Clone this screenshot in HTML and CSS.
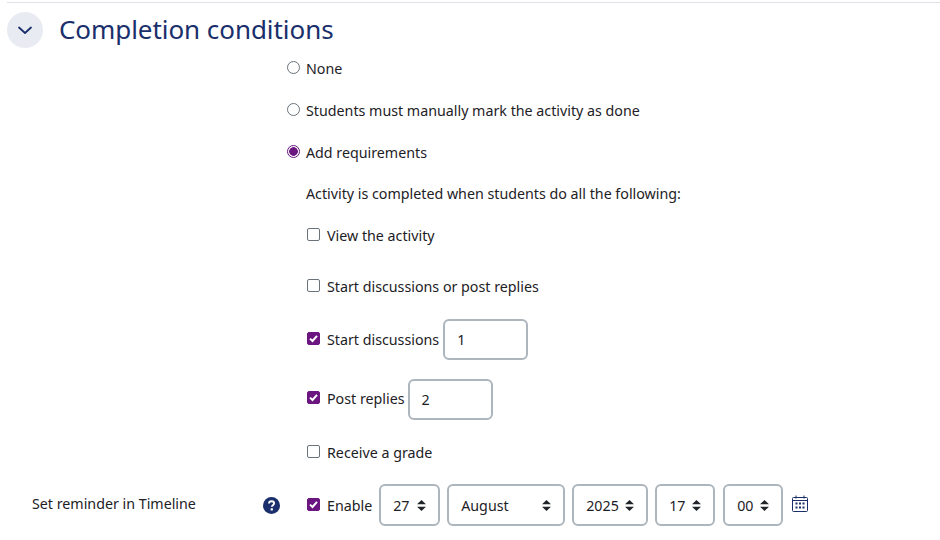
FILE: index.html
```html
<!DOCTYPE html>
<html lang="en">
<head>
    <meta charset="UTF-8">
    <title>Completion conditions</title>
    <link rel="stylesheet" href="styles.css">
</head>
<body>
    <main class="section">
        <div class="section-head">
            <a class="toggle" href="#">
                <svg width="16" height="16" viewBox="0 0 16 16" fill="none" stroke="#1a2f6b" stroke-width="1.8" stroke-linecap="round" stroke-linejoin="round">
                    <path d="M2 5.5 8 11 14 5.5"/>
                </svg>
            </a>
            <h3>Completion conditions</h3>
        </div>
        <div class="options">
            <label class="row r-none"><input type="radio" name="c"> None</label>
            <label class="row r-manual"><input type="radio" name="c"> Students must manually mark the activity as done</label>
            <label class="row r-add"><input type="radio" name="c" checked> Add requirements</label>
            <div class="row r-note">Activity is completed when students do all the following:</div>
            <div class="sub">
                <label class="row r-view"><input type="checkbox"> View the activity</label>
                <label class="row r-start"><input type="checkbox"> Start discussions or post replies</label>
                <div class="row r-disc">
                    <label><input type="checkbox" checked> Start discussions</label>
                    <input class="num" type="text" value="1">
                </div>
                <div class="row r-post">
                    <label><input type="checkbox" checked> Post replies</label>
                    <input class="num" type="text" value="2">
                </div>
                <label class="row r-grade"><input type="checkbox"> Receive a grade</label>
            </div>
        </div>
        <div class="reminder">
            <div class="reminder-label">Set reminder in Timeline</div>
            <div class="help">
                <svg width="17" height="17" viewBox="0 0 17 17">
                    <circle cx="8.5" cy="8.5" r="8.5" fill="#1a2f6b"/>
                    <path d="M6 6.6c0-1.5 1.1-2.4 2.6-2.4s2.5.9 2.5 2.1c0 1.9-2.3 1.9-2.3 3.5" fill="none" stroke="#fff" stroke-width="1.9"/>
                    <rect x="7.6" y="11.2" width="2.3" height="2.2" rx=".4" fill="#fff"/>
                </svg>
            </div>
            <div class="date-fields">
                <label><input type="checkbox" checked> Enable</label>
                <select class="s-day"><option>27</option></select>
                <select class="s-month"><option>August</option></select>
                <select class="s-year"><option>2025</option></select>
                <select class="s-hour"><option>17</option></select>
                <select class="s-min"><option>00</option></select>
                <a class="calendar" href="#">
                    <svg width="16" height="17" viewBox="0 0 16 17" fill="none" stroke="#1a2f6b">
                        <rect x=".5" y="2.5" width="15" height="14" rx="1"/>
                        <path d="M.5 5.5h15M4 .5v3M12 .5v3"/>
                        <path stroke-width="1.8" d="M3.5 8.5h2M7 8.5h2M10.5 8.5h2M3.5 12.5h2M7 12.5h2M10.5 12.5h2"/>
                    </svg>
                </a>
            </div>
        </div>
    </main>
</body>
</html>
```

FILE: styles.css
```css
html, body {
    margin: 0;
    padding: 0;
}

body {
    background: #fff;
    color: #1d2125;
    font-family: "Noto Sans", sans-serif;
    font-size: 14.25px;
}

.section {
    margin-top: 2px;
    margin-left: 7px;
    border-top: 1px solid #dee2e6;
}

.section-head {
    display: flex;
    align-items: center;
    height: 36px;
    margin-top: 9px;
}
.toggle {
    width: 36px;
    height: 36px;
    border-radius: 50%;
    background: #e9ebf2;
    display: flex;
    align-items: center;
    justify-content: center;
}
.section-head h3 {
    margin: 0 0 2px 16px;
    color: #1a2f6b;
    font-size: 26px;
    font-weight: 400;
    letter-spacing: -0.06px;
}

.options {
    margin-left: 280px;
    margin-top: -1px;
}
.row {
    display: flex;
    align-items: center;
    height: 42px;
}
.r-note {
    height: 40px;
    margin-bottom: 1px;
    padding-left: 19px;
}
.sub {
    padding-left: 20px;
}
.r-view {
    height: 42px;
}
.r-start {
    height: 60px;
}
.r-disc {
    height: 46px;
}
.r-post {
    height: 73px;
}
.r-post .num {
    margin-top: 2px;
    margin-left: 3px;
}
.r-grade {
    height: 34px;
}

label {
    display: flex;
    align-items: center;
}

input[type=radio], input[type=checkbox] {
    appearance: none;
    width: 13px;
    height: 13px;
    margin: 0 6px 2px 0;
    border: 1px solid #6a737b;
    background: #fff;
    flex: none;
}
input[type=radio] {
    border-radius: 50%;
}
input[type=radio]:checked {
    border: 1px solid #6a1580;
    background: radial-gradient(circle, #6a1580 0, #6a1580 4px, #fff 4.6px);
}
input[type=checkbox] {
    border-radius: 2px;
    margin-right: 7px;
}
input[type=checkbox]:checked {
    border-color: #6a1580;
    background: #6a1580 url("data:image/svg+xml,%3Csvg xmlns='http://www.w3.org/2000/svg' viewBox='0 0 13 13'%3E%3Cpath d='M3 6.6 5.5 9 10 3.8' fill='none' stroke='%23fff' stroke-width='2'/%3E%3C/svg%3E") center / 13px no-repeat;
}

.num {
    box-sizing: border-box;
    width: 85px;
    height: 41px;
    margin-left: 4px;
    padding: 0 12px;
    border: 2px solid #adb5bd;
    border-radius: 6px;
    font: inherit;
    color: inherit;
}

.reminder {
    display: flex;
    align-items: center;
    height: 42px;
    margin-top: 15px;
}
.reminder-label {
    width: 256px;
    padding-left: 25px;
    padding-bottom: 4px;
    box-sizing: border-box;
}
.help {
    width: 44px;
    display: flex;
}
.date-fields {
    display: flex;
    align-items: center;
    gap: 7px;
}
select {
    appearance: none;
    box-sizing: border-box;
    height: 42px;
    padding: 0 12px;
    border: 2px solid #adb5bd;
    border-radius: 6px;
    font: inherit;
    color: inherit;
    background: #fff url("data:image/svg+xml,%3Csvg xmlns='http://www.w3.org/2000/svg' viewBox='0 0 9 11'%3E%3Cpath d='M4.5 0 9 4.3H0zM4.5 11 0 6.7h9z' fill='%23212529'/%3E%3C/svg%3E") right 12px center / 9px 11px no-repeat;
}
.s-day { width: 61px; }
.s-month { width: 118px; }
.s-year { width: 76px; }
.s-hour { width: 60px; }
.s-min { width: 60px; margin-left: 1px; }
.calendar {
    display: flex;
    margin-left: 2px;
    margin-bottom: 3px;
}
```
